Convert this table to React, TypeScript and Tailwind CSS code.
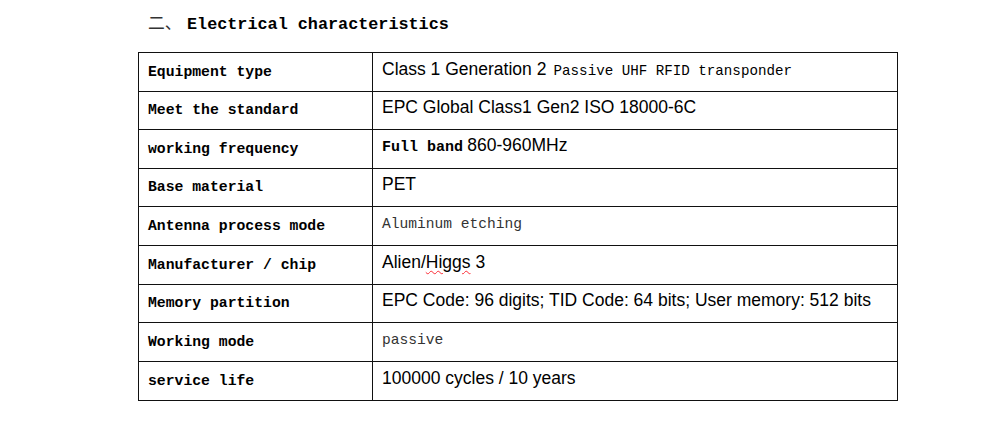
const sans = "font-['Liberation_Sans',Arial,sans-serif] text-[17.5px]";

const rows: { label: string; value: React.ReactNode; h: string }[] = [
  {
    label: "Equipment type",
    value: (
      <>
        <span className={sans}>Class 1 Generation 2</span>{" "}
        <span className="font-['Liberation_Mono',monospace] text-[14.2px] ml-[3px]">Passive UHF RFID transponder</span>
      </>
    ),
    h: "h-[39px]",
  },
  {
    label: "Meet the standard",
    value: <span className={sans}>EPC Global Class1 Gen2 ISO 18000-6C</span>,
    h: "h-[38px]",
  },
  {
    label: "working frequency",
    value: (
      <>
        <span className="font-['Liberation_Mono',monospace] text-[15px] font-bold">Full band</span>{" "}
        <span className={sans}>860-960MHz</span>
      </>
    ),
    h: "h-[39px]",
  },
  {
    label: "Base material",
    value: <span className={sans}>PET</span>,
    h: "h-[38px]",
  },
  {
    label: "Antenna process mode",
    value: <span className="font-['Liberation_Mono',monospace] text-[14.6px] text-[#333]">Aluminum etching</span>,
    h: "h-[39px]",
  },
  {
    label: "Manufacturer / chip",
    value: (
      <span className={sans}>
        Alien/<span className="underline decoration-wavy decoration-red-500 decoration-1 underline-offset-2">Higgs</span> 3
      </span>
    ),
    h: "h-[39px]",
  },
  {
    label: "Memory partition",
    value: <span className={sans}>EPC Code: 96 digits; TID Code: 64 bits; User memory: 512 bits</span>,
    h: "h-[38px]",
  },
  {
    label: "Working mode",
    value: <span className="font-['Liberation_Mono',monospace] text-[14.6px] text-[#333]">passive</span>,
    h: "h-[39px]",
  },
  {
    label: "service life",
    value: <span className={sans}>100000 cycles / 10 years</span>,
    h: "h-[39px]",
  },
];

export default function App() {
  return (
    <div className="w-[986px] h-[421px] bg-white text-black">
      <div className="pl-[148px] pt-[10px] h-[52px] font-['Liberation_Mono','Noto_Sans_CJK_SC',monospace] font-bold text-[16.8px] leading-[24px] whitespace-nowrap">
        <span className="font-['Noto_Sans_CJK_SC',sans-serif] font-normal inline-block w-[39px] text-[#333]">二、</span>
        <span>Electrical characteristics</span>
      </div>
      <div className="ml-[138px] w-[760px] border-l border-t border-[#111]">
        {rows.map((r) => (
          <div key={r.label} className={`flex ${r.h}`}>
            <div className="w-[234px] shrink-0 border-r border-b border-[#111] pl-[9px] flex items-center font-['Liberation_Mono',monospace] font-bold text-[14.75px]">
              {r.label}
            </div>
            <div className="flex-1 border-r border-b border-[#111] pl-[9px] pb-[6px] flex items-center whitespace-nowrap">
              <span>{r.value}</span>
            </div>
          </div>
        ))}
      </div>
    </div>
  );
}
